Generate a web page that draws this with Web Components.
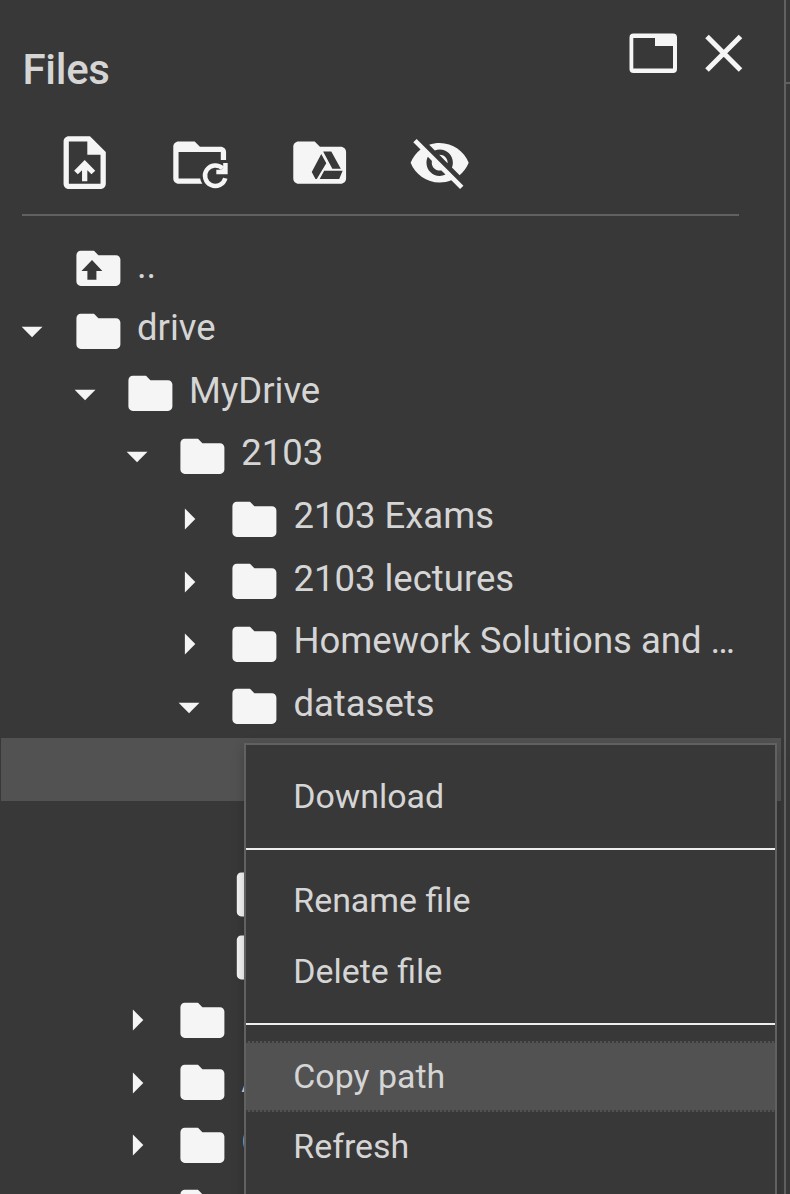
<!DOCTYPE html>
<html lang="en">
<head>
<meta charset="utf-8">
<title>Files</title>
<style>
html, body { margin: 0; height: 1194px; overflow: hidden; background: #383838; }
body { font-family: Roboto, "Liberation Sans", sans-serif; color: #d5d5d5; }
</style>
</head>
<body>
<files-app></files-app>
<script>
const ICONS = {
  upload: '<path d="M14 2H6c-1.1 0-1.99.9-1.99 2L4 20c0 1.1.89 2 1.99 2H18c1.1 0 2-.9 2-2V8l-6-6zm4 18H6V4h7v5h5v11zM8 15.01l1.41 1.41L11 14.84V19h2v-4.16l1.59 1.59L16 15.01 12.01 11 8 15.01z"/>',
  refresh: '<path d="M10.1 4H4c-1.1 0-2 .9-2 2v12c0 1.1.9 2 2 2h9q-.7-.9-.8-2H4V8h16v3h2V8c0-1.1-.9-2-2-2h-7.900z"/><path d="M21.700 17.900A3.900 3.900 0 1 1 20.700 14.200" fill="none" stroke="#f5f5f5" stroke-width="1.700"/><path d="M20.900 12.100h1.700v4.300h-4.300v-1.700h1.900l.700-.700z"/>',
  drive: '<path fill-rule="evenodd" d="M10.100 4H4c-1.100 0-2 .9-2 2v12c0 1.100.9 2 2 2h16c1.100 0 2-.9 2-2V8c0-1.100-.9-2-2-2h-7.900zM13.300 7.800h3.100l3.600 6.500h-3.200zM12.600 8.700l1.900 3.500-3.600 6h-.5L9 15.500zM13.700 15.100h7l-1.300 3.100H12z"/>',
  eye: '<path d="M12 7c2.760 0 5 2.240 5 5 0 .65-.13 1.260-.36 1.830l2.920 2.920c1.510-1.260 2.700-2.890 3.430-4.750-1.730-4.390-6-7.500-11-7.500-1.400 0-2.740.25-3.980.7l2.160 2.160C10.740 7.130 11.350 7 12 7zM2 4.270l2.280 2.280.46.46C3.080 8.300 1.780 10.020 1 12c1.730 4.390 6 7.500 11 7.500 1.550 0 3.030-.3 4.380-.84l.42.42L19.730 22 21 20.730 3.270 3 2 4.270zM7.530 9.800l1.550 1.550c-.05.21-.08.43-.08.65 0 1.660 1.340 3 3 3 .22 0 .44-.03.65-.08l1.550 1.550c-.67.33-1.410.53-2.200.53-2.760 0-5-2.240-5-5 0-.79.2-1.530.53-2.200zm4.310-.78l3.150 3.150.02-.16c0-1.660-1.340-3-3-3l-.17.01z"/>',
  folder: '<path d="M10 4H4c-1.100 0-1.990.9-1.990 2L2 18c0 1.100.9 2 2 2h16c1.100 0 2-.9 2-2V8c0-1.100-.9-2-2-2h-8l-2-2z"/>',
  up: '<path fill-rule="evenodd" d="M10 4H4c-1.100 0-1.990.9-1.990 2L2 18c0 1.100.9 2 2 2h16c1.100 0 2-.9 2-2V8c0-1.100-.9-2-2-2h-8l-2-2zM9.100 8.200l4.700 5h-2.700v4H7v-4H4.300z"/>',
  file: '<path d="M6 2c-1.100 0-2 .9-2 2v16c0 1.100.9 2 2 2h12c1.100 0 2-.9 2-2V8l-6-6z"/>',
  open: '<path d="M7 10l5 5 5-5z"/>',
  closed: '<path d="M10 17l5-5-5-5z"/>'
};

customElements.define('ui-icon', class extends HTMLElement {
  connectedCallback() {
    const n = this.getAttribute('name');
    this.attachShadow({ mode: 'open' }).innerHTML =
      `<style>:host{display:block;flex:none;width:var(--size,52.8px);height:var(--size,52.8px)}svg{display:block;width:100%;height:100%;fill:#f5f5f5}</style>
       <svg viewBox="0 0 24 24">${ICONS[n] || ''}</svg>`;
  }
});

customElements.define('panel-header', class extends HTMLElement {
  constructor() {
    super();
    this.attachShadow({ mode: 'open' }).innerHTML = `
<style>
:host{display:flex;height:130.500px;justify-content:space-between;box-sizing:border-box;padding:0 41.300px 0 22.500px}
h1{margin:45px 0 0;font-size:42px;line-height:50px;font-weight:500;letter-spacing:-.3px;height:50px}
.actions{display:flex;gap:28px;padding-top:33px}
svg{display:block}
</style>
<h1><slot></slot></h1>
<div class="actions">
<svg width="48" height="40" viewBox="0 0 48 40"><path fill="#f5f5f5" fill-rule="evenodd" d="M4 .5h40q4 0 4 4V36q0 4-4 4H4.500q-4 0-4-4V4.500q0-4 4-4zM4.300 5v30.500H44V13H26V5z"/></svg>
<svg width="38" height="40" viewBox="0 0 38 40"><path stroke="#f5f5f5" stroke-width="5" d="M2 3.500l33.500 33.500M35.500 3.500L2 37"/></svg>
</div>`;
  }
});

customElements.define('tool-bar', class extends HTMLElement {
  constructor() {
    super();
    this.attachShadow({ mode: 'open' }).innerHTML = `
<style>
:host{display:flex;box-sizing:border-box;height:85.500px;margin:0 45px 0 22px;padding-left:30.500px;gap:56.640px;border-bottom:2px solid #616161;--size:63.360px}
ui-icon:first-of-type{margin-right:-4.800px}
</style>
<ui-icon name="upload"></ui-icon><ui-icon name="refresh"></ui-icon><ui-icon name="drive"></ui-icon><ui-icon name="eye"></ui-icon>`;
  }
});

customElements.define('tree-row', class extends HTMLElement {
  connectedCallback() {
    const a = k => this.getAttribute(k) || '';
    this.attachShadow({ mode: 'open' }).innerHTML = `
<style>
:host{display:flex;align-items:center;height:62.640px;box-sizing:border-box;padding-left:calc(7.350px + 52.150px * ${a('depth') || 0});margin-right:3px}
:host([selected]){background:#525252;margin-left:1px}
.arrow{--size:50.100px;margin-right:14.200px}
span{margin-left:12.500px;font-size:36.500px;line-height:62px;height:62px;position:relative;top:-3px;white-space:nowrap}
</style>
<ui-icon class="arrow" name="${a('state')}"></ui-icon><ui-icon name="${a('icon') || 'folder'}"></ui-icon><span><slot></slot></span>`;
  }
});

customElements.define('menu-item', class extends HTMLElement {
  constructor() {
    super();
    this.attachShadow({ mode: 'open' }).innerHTML = `
<style>
:host{display:flex;align-items:center;height:70.670px;box-sizing:border-box;padding:0 0 0 47.300px;font-size:33.900px}
:host([active]){background:repeating-linear-gradient(90deg,#3c3c3c 0 2px,#525252 2px 4px) top/100% 2px no-repeat,repeating-linear-gradient(90deg,#3c3c3c 0 2px,#525252 2px 4px) bottom/100% 2px no-repeat,#525252}
</style><slot></slot>`;
  }
});

customElements.define('menu-divider', class extends HTMLElement {
  constructor() {
    super();
    this.attachShadow({ mode: 'open' }).innerHTML = `<style>:host{display:block;height:2px;margin:16px 0;background:#eee}</style>`;
  }
});

customElements.define('context-menu', class extends HTMLElement {
  constructor() {
    super();
    this.attachShadow({ mode: 'open' }).innerHTML = `
<style>
:host{display:block;position:absolute;left:244px;top:743px;width:533px;height:480px;box-sizing:border-box;padding-top:16px;border:2px solid #616161;background:#383838;box-shadow:0 4px 12px rgba(0,0,0,.2)}
</style><slot></slot>`;
  }
});

customElements.define('files-app', class extends HTMLElement {
  constructor() {
    super();
    this.attachShadow({ mode: 'open' }).innerHTML = `
<style>
:host{display:flex;position:relative;width:790px;height:1194px;overflow:hidden;background:#383838}
main{width:784px;flex:none;border-right:2px solid #616161}
aside{flex:1}
aside div{height:82px;border-bottom:2px solid #616161}
nav{padding-top:21.200px}
</style>
<main>
<panel-header>Files</panel-header>
<tool-bar></tool-bar>
<nav>
<tree-row icon="up">..</tree-row>
<tree-row state="open">drive</tree-row>
<tree-row depth="1" state="open">MyDrive</tree-row>
<tree-row depth="2" state="open">2103</tree-row>
<tree-row depth="3" state="closed">2103 Exams</tree-row>
<tree-row depth="3" state="closed">2103 lectures</tree-row>
<tree-row depth="3" state="closed">Homework Solutions and …</tree-row>
<tree-row depth="3" state="open">datasets</tree-row>
<tree-row depth="4" icon="file" selected></tree-row>
<tree-row depth="4" icon="file"></tree-row>
<tree-row depth="3" icon="file"></tree-row>
<tree-row depth="3" icon="file"></tree-row>
<tree-row depth="2" state="closed"></tree-row>
<tree-row depth="2" state="closed">A</tree-row>
<tree-row depth="2" state="closed">C</tree-row>
<tree-row depth="2" state="closed"></tree-row>
</nav>
</main>
<aside><div></div></aside>
<context-menu>
<menu-item>Download</menu-item>
<menu-divider></menu-divider>
<menu-item>Rename file</menu-item>
<menu-item>Delete file</menu-item>
<menu-divider></menu-divider>
<menu-item active>Copy path</menu-item>
<menu-item>Refresh</menu-item>
</context-menu>`;
  }
});
</script>
</body>
</html>
